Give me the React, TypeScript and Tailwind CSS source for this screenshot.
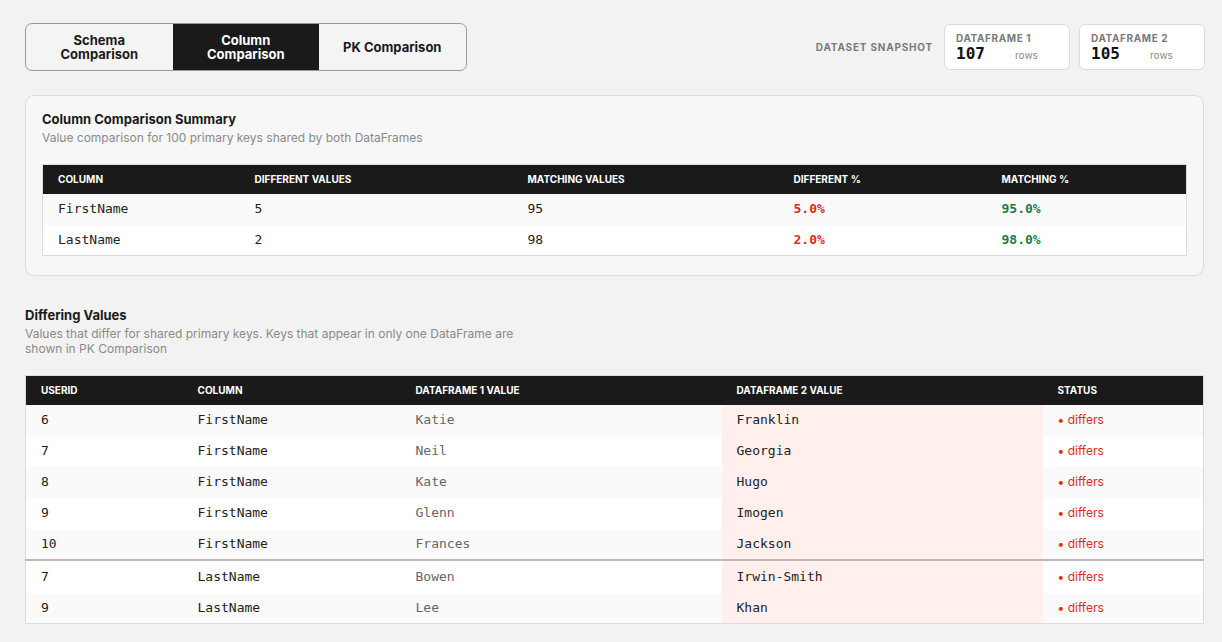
import React from 'react';

const sans = "font-['Inter','Liberation_Sans',sans-serif]";
const mono = "font-['DejaVu_Sans_Mono','Liberation_Mono',monospace]";

const tabs = ['Schema Comparison', 'Column Comparison', 'PK Comparison'];

const summary = [
  { column: 'FirstName', diff: 5, match: 95, diffPct: '5.0%', matchPct: '95.0%' },
  { column: 'LastName', diff: 2, match: 98, diffPct: '2.0%', matchPct: '98.0%' },
];

type Diff = { id: number; column: string; left: string; right: string };

const diffs: Diff[] = [
  { id: 6, column: 'FirstName', left: 'Katie', right: 'Franklin' },
  { id: 7, column: 'FirstName', left: 'Neil', right: 'Georgia' },
  { id: 8, column: 'FirstName', left: 'Kate', right: 'Hugo' },
  { id: 9, column: 'FirstName', left: 'Glenn', right: 'Imogen' },
  { id: 10, column: 'FirstName', left: 'Frances', right: 'Jackson' },
  { id: 7, column: 'LastName', left: 'Bowen', right: 'Irwin-Smith' },
  { id: 9, column: 'LastName', left: 'Lee', right: 'Khan' },
];

function SnapshotCard({ label, rows }: { label: string; rows: number }) {
  return (
    <div className="h-[46px] w-[126px] rounded-md border border-[#dcdcdc] bg-white px-[11px] pt-[8px]">
      <p className="text-[10px] font-bold leading-[11px] tracking-[0.06em] text-[#7a7a7a]">{label}</p>
      <div className="flex items-baseline">
        <span className={`${mono} w-[59px] text-[16px] font-bold leading-[19px] text-[#111]`}>{rows}</span>
        <span className="text-[10px] text-[#8a8a8a]">rows</span>
      </div>
    </div>
  );
}

export default function App() {
  return (
    <div className={`${sans} min-h-[642px] bg-[#f2f2f2] pb-6 pl-[25px] pr-[18px] pt-[23px] text-[#1a1a1a]`}>
      {/* top bar: tab switcher + dataset snapshot */}
      <div className="flex items-start justify-between">
        <div className="flex h-[48px] overflow-hidden rounded-[7px] border border-[#9a9a9a] bg-[#f4f4f4]">
          {tabs.map((t, i) => (
            <button
              key={t}
              type="button"
              className={[
                'flex w-[146.5px] items-center justify-center px-[20px] text-center text-[13px] font-bold leading-[14px]',
                i === 1 ? 'bg-[#1a1a1a] text-white' : 'text-[#1a1a1a]',
              ].join(' ')}
            >
              {t}
            </button>
          ))}
        </div>
        <div className="-mr-[1px] flex items-center gap-[9px] pt-[1px]">
          <span className="mr-[2px] text-[10px] font-bold tracking-[0.08em] text-[#7a7a7a]">DATASET SNAPSHOT</span>
          <SnapshotCard label="DATAFRAME 1" rows={107} />
          <SnapshotCard label="DATAFRAME 2" rows={105} />
        </div>
      </div>

      {/* summary card */}
      <section className="mt-[24px] rounded-[9px] border border-[#dcdcdc] bg-[#f7f7f7] px-[16px] pb-[19px] pt-[15px]">
        <h2 className="text-[13px] font-bold leading-[16px]">Column Comparison Summary</h2>
        <p className="mt-[3px] text-[12px] leading-[15px] text-[#8a8a8a]">
          Value comparison for 100 primary keys shared by both DataFrames
        </p>
        <table className="mt-[19px] w-full table-fixed border-collapse border border-[#dcdcdc]">
          <colgroup>
            <col className="w-[197px]" />
            <col className="w-[273px]" />
            <col className="w-[266px]" />
            <col className="w-[208px]" />
            <col />
          </colgroup>
          <thead>
            <tr className="h-[29px] bg-[#1a1a1a] text-left text-[10px] font-bold text-white">
              <th className="px-[15px]">COLUMN</th>
              <th className="px-[15px]">DIFFERENT VALUES</th>
              <th className="px-[15px]">MATCHING VALUES</th>
              <th className="px-[15px]">DIFFERENT %</th>
              <th className="px-[15px]">MATCHING %</th>
            </tr>
          </thead>
          <tbody className={`${mono} text-[13px]`}>
            {summary.map((r, i) => (
              <tr key={r.column} className={`h-[31px] ${i % 2 === 0 ? 'bg-[#fafafa]' : 'bg-white'}`}>
                <td className="px-[15px] text-[#222]">{r.column}</td>
                <td className="px-[15px] text-[#222]">{r.diff}</td>
                <td className="px-[15px] text-[#222]">{r.match}</td>
                <td className="px-[15px] font-bold text-[#e0291b]">{r.diffPct}</td>
                <td className="px-[15px] font-bold text-[#1f7a4a]">{r.matchPct}</td>
              </tr>
            ))}
          </tbody>
        </table>
      </section>

      {/* differing values */}
      <section className="mt-[31px]">
        <h2 className="text-[13px] font-bold leading-[16px]">Differing Values</h2>
        <p className="mt-[3px] max-w-[500px] text-[12px] leading-[15px] text-[#8a8a8a]">
          Values that differ for shared primary keys. Keys that appear in only one DataFrame are shown in PK Comparison
        </p>
        <table className="mt-[19px] w-full table-fixed border-collapse border border-[#dcdcdc]">
          <colgroup>
            <col className="w-[157px]" />
            <col className="w-[218px]" />
            <col className="w-[321px]" />
            <col className="w-[321px]" />
            <col />
          </colgroup>
          <thead>
            <tr className="h-[29px] bg-[#1a1a1a] text-left text-[10px] font-bold text-white">
              <th className="px-[15px]">USERID</th>
              <th className="px-[15px]">COLUMN</th>
              <th className="px-[15px]">DATAFRAME 1 VALUE</th>
              <th className="px-[15px]">DATAFRAME 2 VALUE</th>
              <th className="px-[15px]">STATUS</th>
            </tr>
          </thead>
          <tbody className={`${mono} text-[13px]`}>
            {diffs.map((d, i) => {
              const groupStart = i > 0 && diffs[i - 1].column !== d.column;
              return (
                <tr
                  key={`${d.column}-${d.id}`}
                  className={[
                    i % 2 === 0 ? 'bg-[#fafafa]' : 'bg-white',
                    groupStart ? 'h-[33px] border-t-2 border-[#bdb8b6]' : 'h-[31px]',
                  ].join(' ')}
                >
                  <td className="px-[15px] text-[#222]">{d.id}</td>
                  <td className="px-[15px] text-[#222]">{d.column}</td>
                  <td className="px-[15px] text-[#666]">{d.left}</td>
                  <td className="bg-[#fff0ed] px-[15px] text-[#222]">{d.right}</td>
                  <td className={`${sans} px-[15px] text-[12px] text-[#e0291b]`}>• differs</td>
                </tr>
              );
            })}
          </tbody>
        </table>
      </section>
    </div>
  );
}
